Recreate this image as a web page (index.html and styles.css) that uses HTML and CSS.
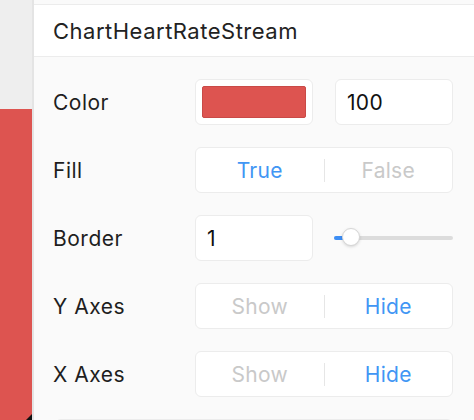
FILE: index.html
```html
<!DOCTYPE html>
<html>
<head>
<meta charset="utf-8">
<link rel="stylesheet" href="styles.css">
</head>
<body>
<div class="app">
  <div class="side">
    <div class="side-top"></div>
    <div class="side-red"></div>
    <div class="corner"></div>
  </div>
  <div class="panel">
    <div class="panel-gap"></div>
    <div class="header">ChartHeartRateStream</div>
    <div class="body">
      <div class="row">
        <div class="label">Color</div>
        <div class="pair">
          <div class="box swatch-box"><div class="swatch"></div></div>
          <div class="box input">100</div>
        </div>
      </div>
      <div class="row">
        <div class="label">Fill</div>
        <div class="box seg">
          <div class="seg-item on">True</div>
          <div class="seg-div"></div>
          <div class="seg-item off">False</div>
        </div>
      </div>
      <div class="row">
        <div class="label">Border</div>
        <div class="pair">
          <div class="box input">1</div>
          <div class="slider">
            <div class="track"><div class="fill"></div><div class="thumb"></div></div>
          </div>
        </div>
      </div>
      <div class="row">
        <div class="label">Y Axes</div>
        <div class="box seg">
          <div class="seg-item off">Show</div>
          <div class="seg-div"></div>
          <div class="seg-item on">Hide</div>
        </div>
      </div>
      <div class="row">
        <div class="label">X Axes</div>
        <div class="box seg">
          <div class="seg-item off">Show</div>
          <div class="seg-div"></div>
          <div class="seg-item on">Hide</div>
        </div>
      </div>
      <div class="box wide"></div>
    </div>
  </div>
</div>
</body>
</html>
```
FILE: styles.css
```css
html, body {
  margin: 0;
  padding: 0;
  height: 100%;
  overflow: hidden;
  background: #fafafa;
  font-family: Inter, "Noto Sans", sans-serif;
  color: #222;
}
.app {
  display: flex;
  height: 420px;
  overflow: hidden;
}
.side {
  position: relative;
  width: 32px;
  flex: 0 0 32px;
  border-right: 2px solid #e4e4e4;
  display: flex;
  flex-direction: column;
}
.side-top {
  height: 109px;
  flex-shrink: 0;
  background: #eeeeee;
}
.side-red {
  flex: 1;
  background: #dd5450;
}
.corner {
  position: absolute;
  right: 0;
  bottom: 0;
  width: 0;
  height: 0;
  border-left: 6px solid transparent;
  border-bottom: 6px solid #111;
}
.panel {
  flex: 1;
  display: flex;
  flex-direction: column;
  background: #fafafa;
  overflow: hidden;
}
.panel-gap {
  height: 4px;
  flex-shrink: 0;
  background: #fafafa;
}
.header {
  flex-shrink: 0;
  height: 51px;
  border-top: 1px solid #ececec;
  border-bottom: 1px solid #ececec;
  background: #fff;
  padding-left: 19px;
  display: flex;
  align-items: center;
  font-size: 22px;
  letter-spacing: 0.5px;
  color: #222;
}
.body {
  flex-shrink: 0;
  padding: 22px 21px 0 19px;
  display: flex;
  flex-direction: column;
  gap: 22px;
}
.row {
  display: grid;
  grid-template-columns: 142px 258px;
  align-items: center;
  height: 46px;
  flex-shrink: 0;
}
.label {
  font-size: 21px;
  letter-spacing: 0.5px;
  color: #1e1e1e;
}
.pair {
  display: grid;
  grid-template-columns: 118px 118px;
  gap: 22px;
  height: 46px;
}
.box {
  box-sizing: border-box;
  background: #fff;
  border: 1.5px solid #ececec;
  border-radius: 6px;
  height: 46px;
  flex-shrink: 0;
}
.swatch-box {
  padding: 6px;
}
.swatch {
  height: 100%;
  background: #dd5450;
  border: 1px solid #c94a47;
  box-sizing: border-box;
  border-radius: 2px;
}
.input {
  display: flex;
  align-items: center;
  padding-left: 11px;
  font-size: 21px;
  letter-spacing: 0.3px;
  color: #111;
}
.seg {
  display: flex;
  align-items: center;
}
.seg-item {
  flex: 1;
  text-align: center;
  font-size: 21px;
  letter-spacing: 0.3px;
}
.seg-item.on { color: #4196f4; }
.seg-item.off { color: #c9c9c9; }
.seg-div {
  width: 1px;
  height: 23px;
  background: #e6e6e6;
}
.slider {
  display: flex;
  align-items: center;
}
.track {
  position: relative;
  width: 120px;
  height: 4px;
  border-radius: 2px;
  background: #dcdcdc;
  margin-left: -1px;
}
.fill {
  width: 17px;
  height: 4px;
  border-radius: 2px;
  background: #3d8ef5;
}
.thumb {
  position: absolute;
  left: 8px;
  top: -8px;
  width: 18px;
  height: 18px;
  box-sizing: border-box;
  border-radius: 50%;
  background: #fff;
  border: 1px solid #d6d6d6;
  box-shadow: 0 1px 3px rgba(0,0,0,0.15);
}
.wide {
  margin-left: 2px;
  width: 398px;
}
```
